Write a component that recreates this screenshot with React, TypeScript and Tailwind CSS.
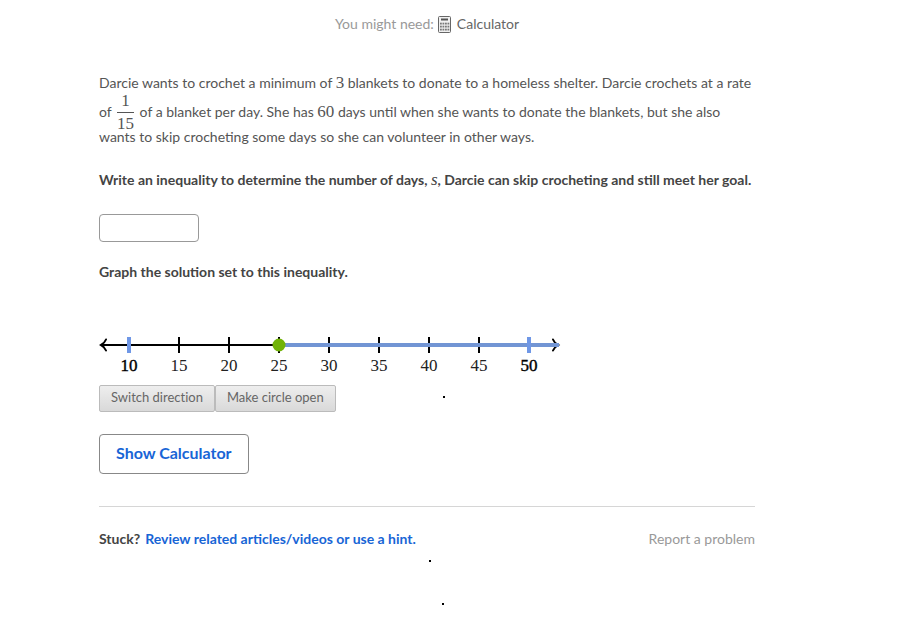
import React, { useState } from 'react'

const TICKS = [10, 15, 20, 25, 30, 35, 40, 45, 50]
const STEP = 50

function CalculatorIcon(){
  return (
    <svg width="13" height="17" viewBox="0 0 13 17" aria-hidden="true">
      <rect x="0.5" y="0.5" width="12" height="16" rx="1" fill="#f0f0f0" stroke="#666" />
      <rect x="3" y="2.500" width="7" height="2" fill="#555" />
      {[7, 10, 13].map(y => [2, 4.5, 7, 9.5].map(x => (
        <rect key={`${x}-${y}`} x={x} y={y - 0.3} width="1.8" height="1.8" fill="#777" />
      )))}
    </svg>
  )
}

function Num({ children }: any){
  return <span className="font-['Liberation_Serif',serif] text-[17px] leading-none">{children}</span>
}

function Fraction({ top, bottom }: any){
  return (
    <span className="mx-0.5 inline-flex h-8 flex-col items-center justify-center pt-1 align-[11px] font-['Liberation_Serif',serif] text-[17px]">
      <span className="leading-[22px]">{top}</span>
      <span className="border-t border-[#555] leading-[22px]">{bottom}</span>
    </span>
  )
}

function NumberLine({ start, right, open }: any){
  const x = (v: number) => 30 + ((v - 10) / 5) * STEP
  const end = right ? 460 : 2
  return (
    <svg width="462" height="46" viewBox="0 0 462 46" role="img" aria-label="Number line">
      <path d="M2 13H458" stroke="#000" strokeWidth="2" />
      <path d="M7 7.500C6 10 4 12 2 13C4 14 6 16 7 18.500" fill="none" stroke="#000" strokeWidth="2" strokeLinecap="round" />
      <path d="M454 7.500C455 10 457 12 459 13C457 14 455 16 454 18.500" fill="none" stroke="#000" strokeWidth="2" strokeLinecap="round" />
      {TICKS.map(v => <path key={v} d={`M${x(v)} 5V21`} stroke="#000" strokeWidth="2" />)}
      <path d={`M${x(start)} 13H${end}`} stroke="#7295d4" strokeWidth="4" />
      {[10, 50].map(v => <path key={v} d={`M${x(v)} 5V21`} stroke="#6f97e6" strokeWidth="4" />)}
      <circle cx={x(start)} cy="13" r="5.500" fill={open ? '#fff' : '#71b307'} stroke="#71b307" strokeWidth="2" />
      {TICKS.map(v => (
        <text key={v} x={x(v)} y="39" textAnchor="middle" fontSize="17" className={v === 10 || v === 50 ? "fill-black stroke-black font-['Liberation_Serif',serif]" : "fill-[#222] font-['Liberation_Serif',serif]"} strokeWidth="0.4">{v}</text>
      ))}
    </svg>
  )
}

function GrayButton({ onClick, children }: any){
  return (
    <button onClick={onClick} className="h-[27px] rounded-xs border border-[#bbb] bg-linear-to-b from-[#eee] to-[#d9d9d9] px-[11px] pb-0.5 text-[13px] text-[#666] [font-variant-ligatures:none]">{children}</button>
  )
}

export default function App(){
  const [answer, setAnswer] = useState('')
  const [right, setRight] = useState(true)
  const [open, setOpen] = useState(false)

  return (
    <div className="relative min-h-screen bg-white px-[99px] pt-3 font-['Lato',sans-serif] text-sm text-[#555]">
      <main className="max-w-[656px]">
        <div className="flex h-6 items-center justify-center">
          <span className="text-[#999]">You might need:</span>
          <a href="#calculator" className="ml-1 flex items-center gap-1.5 text-[#666]"><CalculatorIcon />Calculator</a>
        </div>

        <p className="mt-9 leading-[22px]">
          Darcie wants to crochet a minimum of <Num>3</Num> blankets to donate to a homeless shelter. Darcie crochets at a rate of <Fraction top="1" bottom="15" /> of a blanket per day. She has <Num>60</Num> days until when she wants to donate the blankets, but she also wants to skip crocheting some days so she can volunteer in other ways.
        </p>

        <label htmlFor="answer" className="mt-[21px] block font-bold leading-[22px] text-[#444]">
          Write an inequality to determine the number of days, <i className="font-['Liberation_Serif',serif] text-[17px] font-normal leading-none">s</i>, Darcie can skip crocheting and still meet her goal.
        </label>
        <input id="answer" type="text" value={answer} onChange={e => setAnswer(e.target.value)} className="mt-[23px] block h-7 w-[100px] rounded border border-[#999] px-1 outline-none" />

        <p className="mt-[19px] font-bold leading-[22px] text-[#444]">Graph the solution set to this inequality.</p>

        <div className="mt-[49px]">
          <NumberLine start={25} right={right} open={open} />
        </div>
        <div className="mt-[7px] flex">
          <GrayButton onClick={() => setRight(!right)}>Switch direction</GrayButton>
          <GrayButton onClick={() => setOpen(!open)}>{open ? 'Make circle filled' : 'Make circle open'}</GrayButton>
        </div>

        <button className="mt-[22px] block h-10 rounded border border-[#888] px-4 pb-0.5 text-base font-bold text-[#1865d6]">Show Calculator</button>

        <div className="mt-8 flex items-center justify-between border-t border-[#d6d6d6] pt-[21px] leading-[22px]">
          <div className="flex gap-[5px] font-bold text-[#444]">Stuck?<a href="#hint" className="text-[#1865d6]">Review related articles/videos or use a hint.</a></div>
          <a href="#report" className="text-[#999]">Report a problem</a>
        </div>
      </main>

      {/* stray specks */}
      <i className="absolute left-[443px] top-[396px] size-0.5 bg-black" />
      <i className="absolute left-[429px] top-[560px] size-0.5 bg-black" />
      <i className="absolute left-[442px] top-[603px] size-0.5 bg-black" />
    </div>
  )
}
